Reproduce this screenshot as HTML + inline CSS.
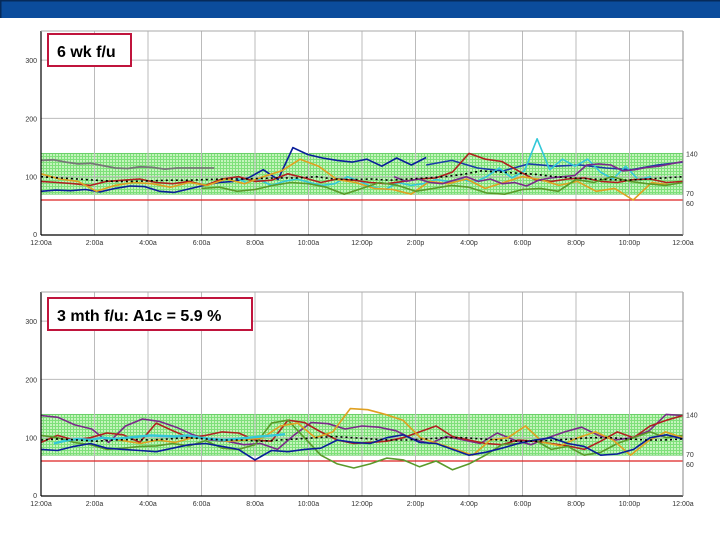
<!DOCTYPE html>
<html><head><meta charset="utf-8"><style>
html,body{margin:0;padding:0;background:#fff;width:720px;height:540px;overflow:hidden}
svg{display:block}
text{font-family:"Liberation Sans",sans-serif}
</style></head><body>
<svg id="s" width="720" height="540" viewBox="0 0 720 540" xmlns="http://www.w3.org/2000/svg">
<defs>
<pattern id="dots" width="3" height="3" patternUnits="userSpaceOnUse">
<rect width="3" height="3" fill="#7ee07a"/><rect width="2" height="2" fill="#c4f4bc"/>
</pattern>
</defs>
<rect x="0" y="0" width="720" height="18" fill="#0b4c9c"/>
<rect x="0" y="0" width="720" height="1.5" fill="#062a5a"/>
<rect x="0" y="0" width="1.5" height="18" fill="#062a5a"/>
<g id="c1" transform="translate(41,31)"></g>
<g id="c2" transform="translate(41,292)"></g>
<rect x="48" y="34" width="83" height="32" fill="#fff" stroke="#c0143c" stroke-width="2"/>
<text x="57" y="57" font-size="16" font-weight="bold" fill="#000">6 wk f/u</text>
<rect x="48" y="298" width="204" height="32" fill="#fff" stroke="#c0143c" stroke-width="2"/>
<text x="57" y="321" font-size="16" font-weight="bold" fill="#000">3 mth f/u: A1c = 5.9 %</text>
</svg>
<script>
var NS="http://www.w3.org/2000/svg";
function el(p,t,a){var e=document.createElementNS(NS,t);for(var k in a)e.setAttribute(k,a[k]);p.appendChild(e);return e;}
var W=642,H=204,k=0.583;
function Y(v){return H-v*k;}
var xl=["12:00a","2:00a","4:00a","6:00a","8:00a","10:00a","12:00p","2:00p","4:00p","6:00p","8:00p","10:00p","12:00a"];
function chart(g,series){
  el(g,"rect",{x:0,y:Y(140),width:W,height:Y(70)-Y(140),fill:"url(#dots)",stroke:"#6c6",  "stroke-width":0.8});
  for(var i=1;i<12;i++)el(g,"line",{x1:i*W/12,x2:i*W/12,y1:0,y2:H,stroke:"#bbb","stroke-width":1});
  [100,200,300].forEach(function(v){el(g,"line",{x1:0,x2:W,y1:Y(v),y2:Y(v),stroke:"#bbb","stroke-width":1});
    var t=el(g,"text",{x:-4,y:Y(v)+3,"font-size":7,"text-anchor":"end",fill:"#333"});t.textContent=v;});
  var t0=el(g,"text",{x:-4,y:H+2,"font-size":7,"text-anchor":"end",fill:"#333"});t0.textContent="0";
  el(g,"line",{x1:0,x2:W,y1:Y(60),y2:Y(60),stroke:"#d22","stroke-width":1.3});
  [["140",140,0],["70",70,0],["60",60,7]].forEach(function(a){var t=el(g,"text",{x:W+3,y:Y(a[1])+3+(a[0]=="60"?3:0)-(a[0]=="70"?1:0),"font-size":7,fill:"#333"});t.textContent=a[0];});
  series.forEach(function(s){
    var pts=[],n=s.v.length,st=s.s||0,en=s.e||1;
    for(var i=0;i<n;i++){pts.push(((st+(en-st)*i/(n-1))*W).toFixed(1)+","+Y(s.v[i]).toFixed(1));}
    var a={points:pts.join(" "),fill:"none",stroke:s.c,"stroke-width":s.w||1.6,"stroke-linejoin":"round"};
    if(s.d)a["stroke-dasharray"]=s.d;
    el(g,"polyline",a);
  });
  el(g,"line",{x1:0,x2:0,y1:0,y2:H,stroke:"#000","stroke-width":1.2});
  el(g,"line",{x1:0,x2:W,y1:H,y2:H,stroke:"#000","stroke-width":1.2});
  el(g,"line",{x1:W,x2:W,y1:0,y2:H,stroke:"#888","stroke-width":1});
  el(g,"line",{x1:0,x2:W,y1:0,y2:0,stroke:"#aaa","stroke-width":1});
  for(var i=0;i<13;i++){var t=el(g,"text",{x:i*W/12,y:H+10,"font-size":7,"text-anchor":"middle",fill:"#333"});t.textContent=xl[i];}
}
chart(document.getElementById("c1"),[
 {c:"#777",s:0,e:0.27,v:[128,129,125,122,123,119,115,114,117,116,113,115,115,115,115],w:1.8},
 {c:"#0a1e9a",s:0,e:0.6,v:[75,77,76,78,74,80,84,83,75,73,79,85,90,92,98,112,95,150,138,132,128,125,130,118,132,120,133]},
 {c:"#1a3aa8",s:0.6,e:1,v:[120,128,115,110,122,118,120,115,112,120,125]},
 {c:"#33c8d8",s:0.3,e:0.95,v:[100,90,95,85,92,96,90,85,88,100,92,82,78,90,85,88,95,92,96,90,100,115,98,110,165,112,130,118,130,108,96,118,95,100]},
 {c:"#b02020",s:0,e:1,v:[92,90,88,85,92,94,96,90,88,92,85,96,100,92,94,105,98,90,96,94,90,88,92,96,98,108,140,130,126,110,95,92,96,98,92,90,95,96,90,92]},
 {c:"#e0a020",s:0,e:0.98,v:[105,96,92,75,85,90,88,82,90,85,96,88,100,110,130,118,95,90,80,78,70,92,88,96,80,90,100,95,85,92,75,80,60,90,86]},
 {c:"#5a9a2a",s:0.25,e:1,v:[80,82,75,78,85,90,88,82,70,80,90,85,75,80,85,82,72,70,78,80,75,95,90,100,92,88,85,90]},
 {c:"#7a2a8a",s:0.55,e:1,v:[100,92,96,90,88,94,100,92,96,88,90,84,94,98,100,102,120,122,120,110,112,116,118,122,126]},
 {c:"#000",s:0,e:1,d:"2,3",w:1.6,v:[100,98,96,94,92,92,93,94,94,95,96,96,97,98,98,100,96,95,96,94,96,98,100,104,110,108,106,104,100,98,96,95,94,96,98,100]}
]);
chart(document.getElementById("c2"),[
 {c:"#7a2a8a",s:0,e:1,v:[138,135,122,115,92,120,132,128,118,105,96,94,88,90,80,105,126,124,115,120,118,112,98,90,102,96,90,108,96,88,100,110,118,104,96,100,112,140,138]},
 {c:"#b02020",s:0,e:1,v:[92,104,96,100,108,105,92,125,112,100,104,110,108,96,94,130,126,110,96,90,92,94,100,110,120,102,96,90,88,96,94,90,86,80,94,110,100,120,130,138]},
 {c:"#5a9a2a",s:0,e:1,v:[104,100,92,88,80,82,85,86,90,86,95,82,80,88,125,130,100,70,55,48,55,65,62,50,60,45,55,70,88,90,96,80,85,70,75,90,100,110,100,104]},
 {c:"#e0a020",s:0.1,e:1,v:[100,95,90,96,92,100,98,94,96,100,120,125,100,110,150,148,140,130,100,90,80,70,96,100,120,92,86,100,110,96,70,94,110,100]},
 {c:"#0a1e9a",s:0,e:1,v:[80,78,85,90,82,80,78,76,82,88,90,85,80,62,78,76,80,82,96,92,90,100,105,92,90,80,70,75,82,90,96,100,90,85,70,72,80,100,105,98]},
 {c:"#33c8d8",s:0.02,e:0.38,v:[90,95,98,96,100,98,100,102,104,103,102,104,100,98,96,98,100,102,104,106],w:2.4},
 {c:"#000",s:0,e:1,d:"2,3",w:1.6,v:[96,98,96,94,96,97,96,98,100,98,96,96,94,96,98,100,102,100,98,96,96,98,100,100,98,96,94,94,96,98,100,100,98,96,96,98]}
]);
</script>
</body></html>
